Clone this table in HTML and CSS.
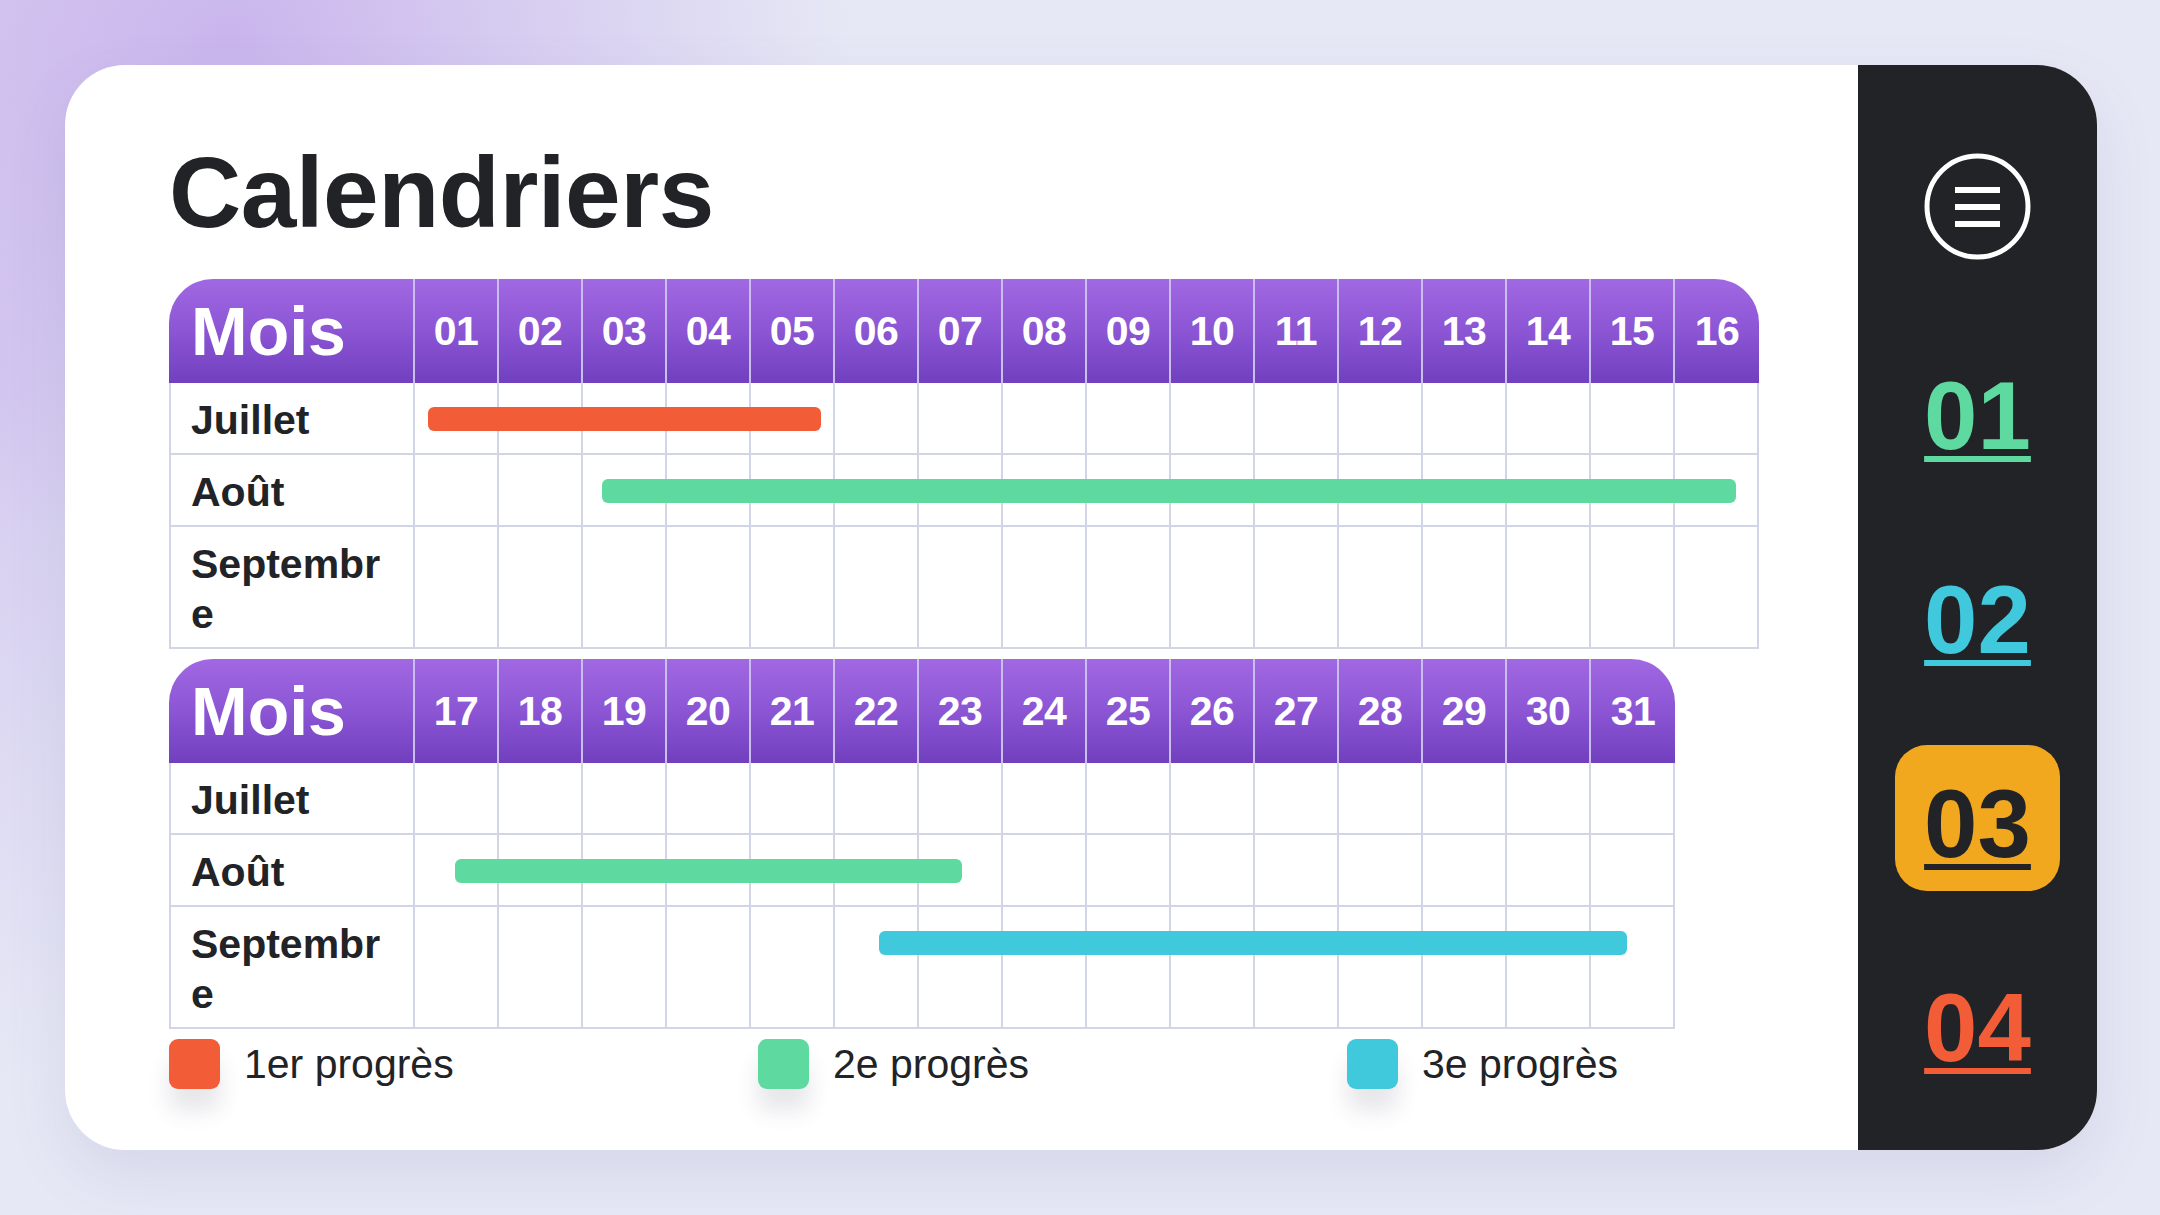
FILE: index.html
```html
<!DOCTYPE html>
<html lang="fr">
<head>
<meta charset="utf-8">
<title>Calendriers</title>
<link rel="stylesheet" href="styles.css">
</head>
<body>
<div class="page">
  <div class="card">
    <main class="main">
      <h1 class="title">Calendriers</h1>

      <section class="cal cal-16">
        <div class="cal-head">
          <div class="hc mois">Mois</div>
          <div class="hc">01</div><div class="hc">02</div><div class="hc">03</div><div class="hc">04</div>
          <div class="hc">05</div><div class="hc">06</div><div class="hc">07</div><div class="hc">08</div>
          <div class="hc">09</div><div class="hc">10</div><div class="hc">11</div><div class="hc">12</div>
          <div class="hc">13</div><div class="hc">14</div><div class="hc">15</div><div class="hc">16</div>
        </div>
        <div class="cal-row">
          <div class="lc">Juillet</div>
          <div class="dc"></div><div class="dc"></div><div class="dc"></div><div class="dc"></div>
          <div class="dc"></div><div class="dc"></div><div class="dc"></div><div class="dc"></div>
          <div class="dc"></div><div class="dc"></div><div class="dc"></div><div class="dc"></div>
          <div class="dc"></div><div class="dc"></div><div class="dc"></div><div class="dc"></div>
          <span class="bar red" style="left:259px;width:393px"></span>
        </div>
        <div class="cal-row">
          <div class="lc">Août</div>
          <div class="dc"></div><div class="dc"></div><div class="dc"></div><div class="dc"></div>
          <div class="dc"></div><div class="dc"></div><div class="dc"></div><div class="dc"></div>
          <div class="dc"></div><div class="dc"></div><div class="dc"></div><div class="dc"></div>
          <div class="dc"></div><div class="dc"></div><div class="dc"></div><div class="dc"></div>
          <span class="bar green" style="left:433px;width:1134px"></span>
        </div>
        <div class="cal-row">
          <div class="lc">Septembre</div>
          <div class="dc"></div><div class="dc"></div><div class="dc"></div><div class="dc"></div>
          <div class="dc"></div><div class="dc"></div><div class="dc"></div><div class="dc"></div>
          <div class="dc"></div><div class="dc"></div><div class="dc"></div><div class="dc"></div>
          <div class="dc"></div><div class="dc"></div><div class="dc"></div><div class="dc"></div>
        </div>
      </section>

      <section class="cal cal-15">
        <div class="cal-head">
          <div class="hc mois">Mois</div>
          <div class="hc">17</div><div class="hc">18</div><div class="hc">19</div><div class="hc">20</div>
          <div class="hc">21</div><div class="hc">22</div><div class="hc">23</div><div class="hc">24</div>
          <div class="hc">25</div><div class="hc">26</div><div class="hc">27</div><div class="hc">28</div>
          <div class="hc">29</div><div class="hc">30</div><div class="hc">31</div>
        </div>
        <div class="cal-row">
          <div class="lc">Juillet</div>
          <div class="dc"></div><div class="dc"></div><div class="dc"></div><div class="dc"></div>
          <div class="dc"></div><div class="dc"></div><div class="dc"></div><div class="dc"></div>
          <div class="dc"></div><div class="dc"></div><div class="dc"></div><div class="dc"></div>
          <div class="dc"></div><div class="dc"></div><div class="dc"></div>
        </div>
        <div class="cal-row">
          <div class="lc">Août</div>
          <div class="dc"></div><div class="dc"></div><div class="dc"></div><div class="dc"></div>
          <div class="dc"></div><div class="dc"></div><div class="dc"></div><div class="dc"></div>
          <div class="dc"></div><div class="dc"></div><div class="dc"></div><div class="dc"></div>
          <div class="dc"></div><div class="dc"></div><div class="dc"></div>
          <span class="bar green" style="left:286px;width:507px"></span>
        </div>
        <div class="cal-row">
          <div class="lc">Septembre</div>
          <div class="dc"></div><div class="dc"></div><div class="dc"></div><div class="dc"></div>
          <div class="dc"></div><div class="dc"></div><div class="dc"></div><div class="dc"></div>
          <div class="dc"></div><div class="dc"></div><div class="dc"></div><div class="dc"></div>
          <div class="dc"></div><div class="dc"></div><div class="dc"></div>
          <span class="bar cyan" style="left:710px;width:748px"></span>
        </div>
      </section>

      <div class="legend">
        <div class="legend-item"><span class="swatch red"></span><span class="legend-text">1er progrès</span></div>
        <div class="legend-item"><span class="swatch green"></span><span class="legend-text">2e progrès</span></div>
        <div class="legend-item"><span class="swatch cyan"></span><span class="legend-text">3e progrès</span></div>
      </div>
    </main>

    <aside class="side">
      <div class="menu-btn">
        <svg width="107" height="107" viewBox="0 0 107 107">
          <circle cx="53.5" cy="53.5" r="50.5" fill="none" stroke="#ffffff" stroke-width="5"/>
          <rect x="31" y="34" width="45" height="6" fill="#ffffff"/>
          <rect x="31" y="51" width="45" height="6" fill="#ffffff"/>
          <rect x="31" y="68" width="45" height="6" fill="#ffffff"/>
        </svg>
      </div>
      <nav class="nav">
        <a class="nav-item n1"><span class="num">01</span></a>
        <a class="nav-item n2"><span class="num">02</span></a>
        <a class="nav-item n3 active"><span class="num">03</span></a>
        <a class="nav-item n4"><span class="num">04</span></a>
      </nav>
    </aside>
  </div>
</div>
</body>
</html>
```

FILE: styles.css
```css
* {
  box-sizing: border-box;
}

html, body {
  margin: 0;
  padding: 0;
}

body {
  width: 2160px;
  height: 1215px;
  overflow: hidden;
  font-family: "Liberation Sans", Arial, sans-serif;
  color: #212327;
  background-color: #e6e8f5;
  background-image:
    radial-gradient(ellipse 620px 520px at 230px 40px, rgba(200, 178, 236, 0.95), rgba(200, 178, 236, 0) 100%),
    radial-gradient(ellipse 260px 700px at 0px 380px, rgba(205, 190, 238, 0.7), rgba(205, 190, 238, 0) 100%);
}

.page {
  padding: 65px 63px 65px 65px;
}

.card {
  width: 2032px;
  height: 1085px;
  display: flex;
  background: #ffffff;
  border-radius: 60px;
  overflow: hidden;
  box-shadow: 0 24px 60px rgba(90, 95, 160, 0.12);
}

.main {
  flex: 1;
  min-width: 0;
  padding: 77px 0 0 104px;
}

.title {
  margin: 0 0 37px 0;
  font-size: 100px;
  line-height: 1;
  font-weight: 700;
  color: #212327;
  letter-spacing: -0.5px;
}

.cal {
  --n: 16;
  width: max-content;
  margin-bottom: 10px;
}

.cal-16 { --n: 16; }
.cal-15 { --n: 15; }

.cal-head,
.cal-row {
  display: grid;
  grid-template-columns: 246px repeat(var(--n), 84px);
}

.cal-head {
  height: 104px;
  border-radius: 44px 44px 0 0;
  background: linear-gradient(180deg, #a268e3 0%, #8b55d4 50%, #7140bf 100%);
  overflow: hidden;
}

.hc {
  display: flex;
  align-items: center;
  justify-content: center;
  color: #ffffff;
  font-weight: 700;
  font-size: 41px;
  letter-spacing: -0.5px;
  border-right: 2px solid #c9bfee;
}

.hc:last-child {
  border-right: none;
}

.hc.mois {
  justify-content: flex-start;
  padding-left: 22px;
  font-size: 68px;
  letter-spacing: 0;
}

.cal-row {
  position: relative;
}

.lc {
  padding: 12px 18px 8px 20px;
  font-size: 41px;
  line-height: 50px;
  font-weight: 700;
  color: #212327;
  word-break: break-all;
  border-left: 2px solid #d2d5e6;
  border-right: 2px solid #d2d5e6;
  border-bottom: 2px solid #d2d5e6;
}

.dc {
  border-right: 2px solid #d2d5e6;
  border-bottom: 2px solid #d2d5e6;
}

.bar {
  position: absolute;
  top: 24px;
  height: 24px;
  border-radius: 6px;
}

.red { background: #f25c36; }
.green { background: #5ed9a0; }
.cyan { background: #40c8dc; }

.legend {
  display: flex;
  margin-top: 0;
}

.legend-item {
  width: 589px;
  flex-shrink: 0;
  display: flex;
  align-items: center;
}

.legend-item:last-child {
  width: auto;
}

.swatch {
  width: 51px;
  height: 50px;
  border-radius: 9px;
  box-shadow: 0 22px 22px rgba(60, 60, 90, 0.12);
}

.legend-text {
  margin-left: 24px;
  font-size: 41px;
  color: #212327;
}

.side {
  width: 239px;
  flex-shrink: 0;
  background: #212327;
  display: flex;
  flex-direction: column;
  align-items: center;
  padding-top: 88px;
}

.menu-btn {
  width: 107px;
  height: 107px;
  line-height: 0;
}

.nav {
  margin-top: 77px;
  display: flex;
  flex-direction: column;
  align-items: center;
  gap: 58px;
}

.nav-item {
  width: 165px;
  height: 146px;
  border-radius: 32px;
  display: flex;
  justify-content: center;
  padding-top: 31px;
}

.num {
  font-size: 96px;
  line-height: 1;
  font-weight: 700;
  text-decoration: underline;
  text-decoration-thickness: 6px;
  text-underline-offset: 7px;
}

.n1 .num { color: #5ed9a0; }
.n2 .num { color: #40c8dc; }
.n3 .num { color: #212327; }
.n4 .num { color: #f25c36; }

.nav-item.active {
  background: #f2a81e;
}
```
